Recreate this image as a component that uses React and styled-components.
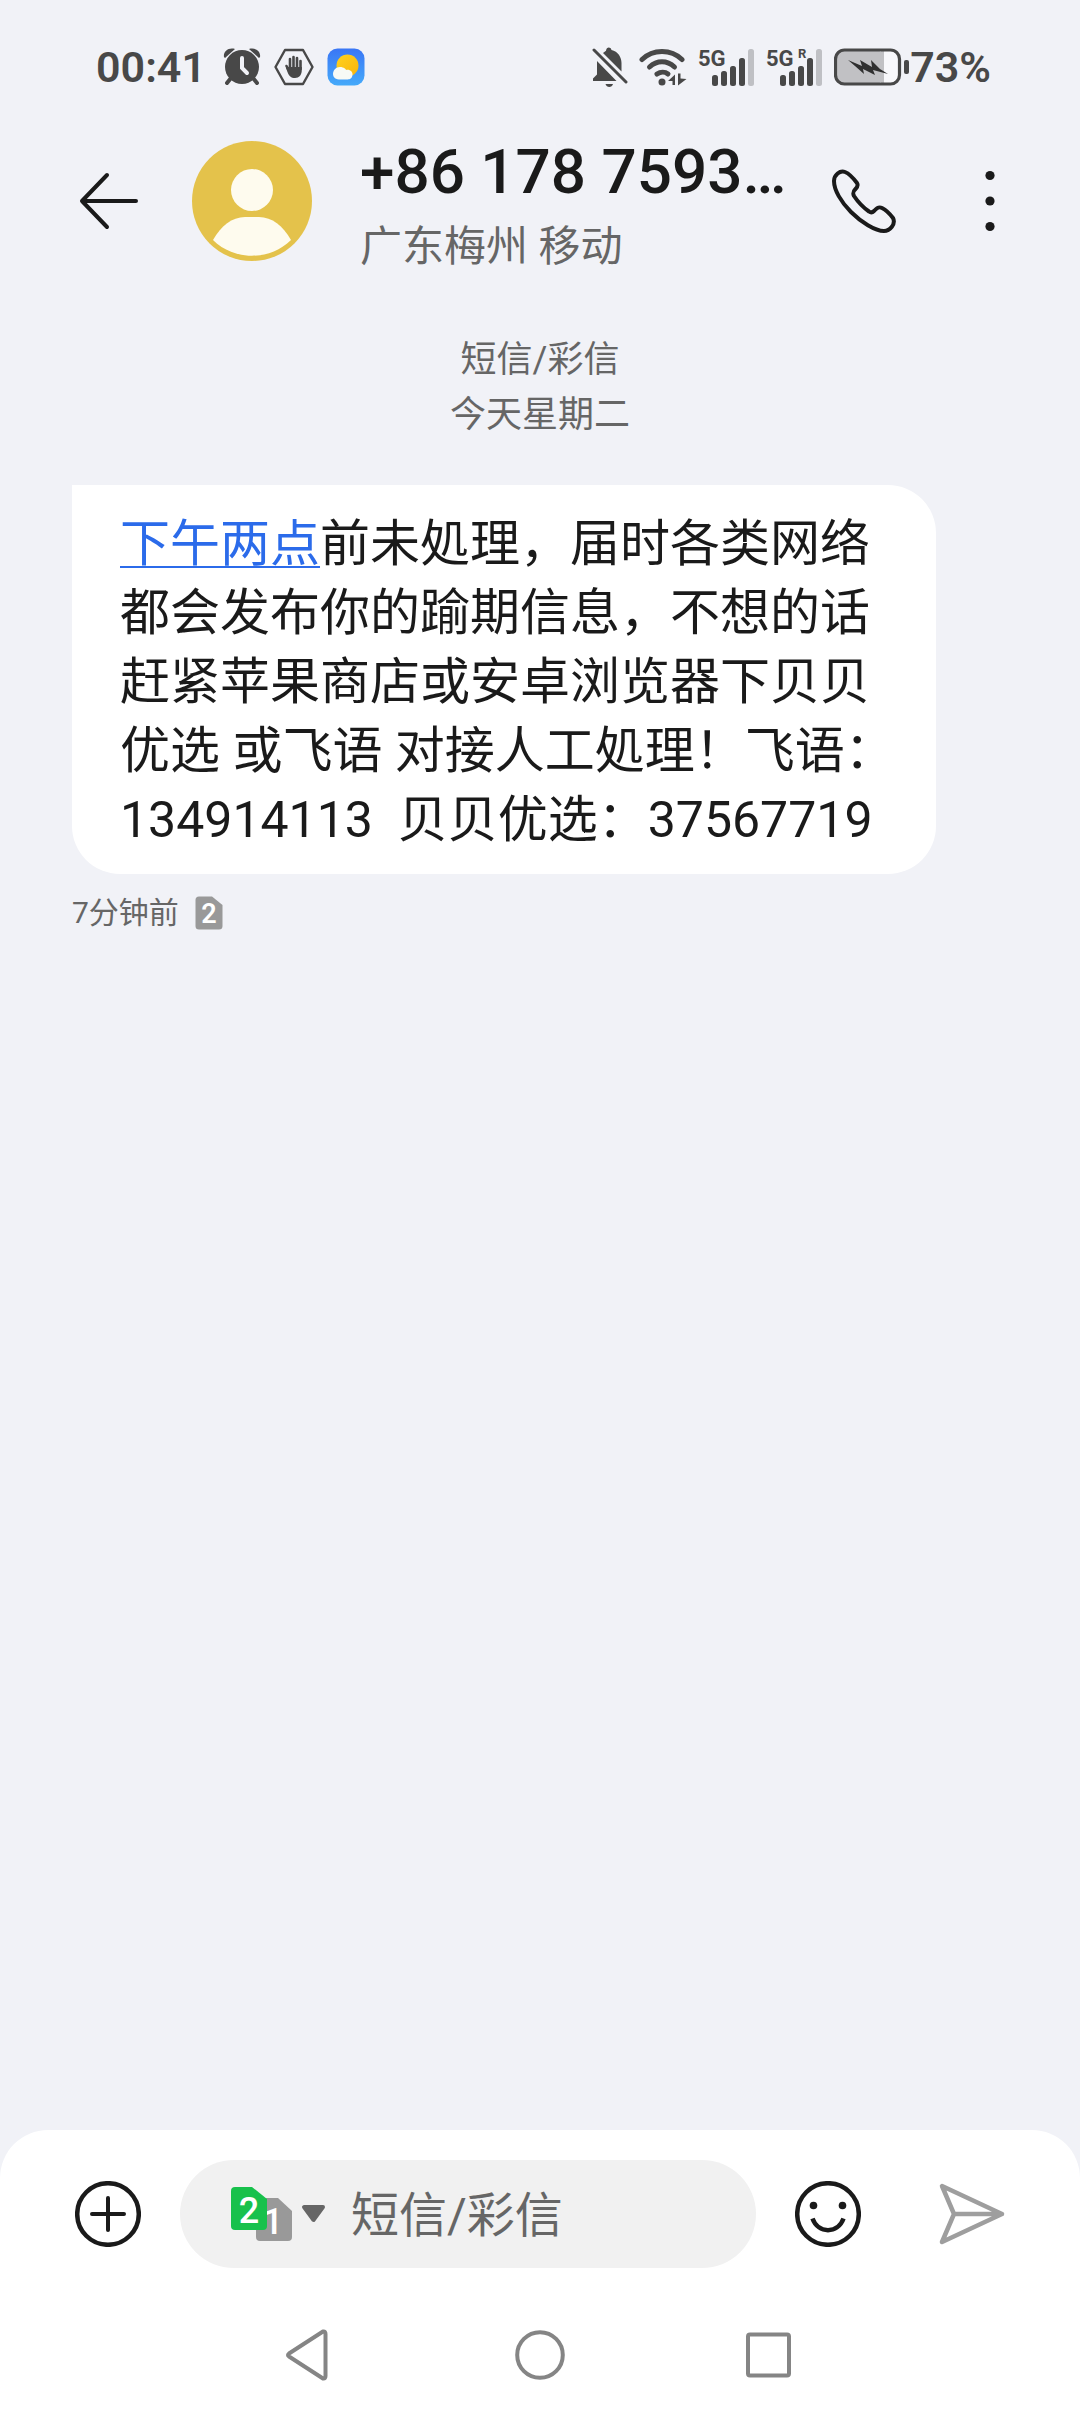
import React, { useState } from 'react';
import styled, { createGlobalStyle } from 'styled-components';

const GlobalStyle = createGlobalStyle`
  * {
    box-sizing: border-box;
  }
  body {
    margin: 0;
    background-color: #f1f2f7;
    color: #1a1a1a;
    font-family: Roboto, 'Noto Sans CJK SC', sans-serif;
  }
  button {
    display: block;
    padding: 0;
    border: 0;
    background: none;
    color: inherit;
    font: inherit;
    cursor: pointer;
  }
  svg {
    display: block;
    flex: none;
  }
  h1,
  p {
    margin: 0;
  }
`;

const Page = styled.div`
  min-height: 100vh;
  display: flex;
  flex-direction: column;
`;

const StatusBar = styled.div`
  display: flex;
  align-items: center;
  justify-content: space-between;
  height: 134px;
  padding: 0 89px 0 96px;
  color: #484848;
`;

const StatusGroup = styled.div`
  display: flex;
  align-items: center;
  gap: ${(props) => props.$gap}px;
`;

const StatusText = styled.span`
  font-size: 43px;
  font-weight: 600;
  line-height: 48px;
`;

const BatteryLevel = styled.div`
  display: flex;
  align-items: center;
`;

const ChatHeader = styled.header`
  display: flex;
  align-items: center;
  height: 134px;
  padding: 0 75px 0 78px;
`;

const Avatar = styled.div`
  flex: none;
  margin: 0 48px 0 52px;
`;

const Contact = styled.div`
  flex: 1;
  min-width: 0;
  display: flex;
  flex-direction: column;
  gap: 15px;
  padding-top: 5px;
`;

const ContactNumber = styled.h1`
  font-size: 62px;
  font-weight: 500;
  line-height: 72px;
  white-space: nowrap;
  overflow: hidden;
`;

const ContactPlace = styled.p`
  color: #666;
  font-size: 42px;
  line-height: 48px;
`;

const HeaderActions = styled.div`
  display: flex;
  align-items: center;
  gap: 78px;
`;

const Thread = styled.main`
  flex: 1;
  padding: 65px 72px;
`;

const ThreadInfo = styled.div`
  margin-bottom: 42px;
  color: #666;
  font-size: 36px;
  line-height: 55px;
  text-align: center;
`;

const Bubble = styled.div`
  max-width: 864px;
  padding: 25px 36px 19px 48px;
  border-radius: 0 48px 48px 48px;
  background-color: #fff;
  font-size: 50px;
  line-height: 69px;
  white-space: pre-wrap;
  a {
    color: #2b6bea;
    text-decoration-thickness: 2px;
    text-underline-offset: 5px;
    text-decoration-skip-ink: none;
  }
`;

const BubbleMeta = styled.div`
  display: flex;
  align-items: center;
  gap: 16px;
  margin-top: 15px;
  color: #666;
  font-size: 30px;
  line-height: 48px;
`;

const BottomPanel = styled.footer`
  border-radius: 48px 48px 0 0;
  background-color: #fff;
`;

const Composer = styled.form`
  display: flex;
  align-items: center;
  padding: 30px 75px;
`;

const InputPill = styled.div`
  flex: 1;
  min-width: 0;
  display: flex;
  align-items: center;
  gap: 26px;
  height: 108px;
  margin: 0 39px;
  padding: 0 51px;
  border-radius: 54px;
  background-color: #f1f1f1;
`;

const MessageInput = styled.input`
  flex: 1;
  min-width: 0;
  padding: 3px 0 0;
  border: 0;
  outline: 0;
  background: none;
  color: #1a1a1a;
  font: inherit;
  font-size: 48px;
  line-height: 72px;
  &::placeholder {
    color: #666;
    opacity: 1;
  }
`;

const SendButton = styled.button`
  margin-left: 75px;
`;

const NavBar = styled.nav`
  display: flex;
  align-items: center;
  justify-content: space-around;
  height: 114px;
  padding: 0 192px;
`;

const AlarmIcon = () => (
  <svg width="38" height="38" viewBox="0 0 38 38" fill="#484848">
    <path d="M1 9C0 4 5-1 12 1L2 10zM37 9C38 4 33-1 26 1L36 10z" />
    <path d="M8 30L4 35M30 30L34 35" stroke="#484848" strokeWidth="4" strokeLinecap="round" />
    <circle cx="19" cy="19" r="17" />
    <path d="M19 10V20L24 25" fill="none" stroke="#f1f2f7" strokeWidth="4" strokeLinecap="round" />
  </svg>
);

const HandIcon = () => (
  <svg width="40" height="38" viewBox="0 0 40 38" fill="none" stroke="#484848" strokeLinecap="round" strokeLinejoin="round">
    <path d="M11 2H29L38.5 19L29 36H11L1.5 19Z" strokeWidth="2.4" />
    <path d="M16 20V11M19.5 20V9M23 20V10M26.5 21V13M12.5 18L15.5 24" strokeWidth="2.6" />
    <path d="M14.7 19H27.8V22C27.8 27 25 30 21 30C17 30 15 28 13.5 24L12 20Z" fill="#484848" stroke="none" />
  </svg>
);

const WeatherIcon = () => (
  <svg width="38" height="38" viewBox="0 0 38 38">
    <defs>
      <linearGradient id="sky" x1="0" y1="0" x2="0" y2="1">
        <stop offset="0" stopColor="#3a76f5" />
        <stop offset="1" stopColor="#45aafa" />
      </linearGradient>
      <linearGradient id="sun" x1="0" y1="0" x2="1" y2="1">
        <stop offset="0" stopColor="#ffd21f" />
        <stop offset="1" stopColor="#f9b40b" />
      </linearGradient>
    </defs>
    <rect x="0.5" y="0.5" width="37" height="37" rx="10" fill="url(#sky)" />
    <circle cx="20.5" cy="17.5" r="11" fill="url(#sun)" />
    <path d="M12 31.5C3 31 5 19 13 19C17 19 19 21.5 19 22C23 21 26 24 25.5 27C25 31 22 31.5 20 31.5Z" fill="#f7faf5" />
  </svg>
);

const MutedBellIcon = () => (
  <svg width="36" height="40" viewBox="0 0 36 40" fill="#484848">
    <path d="M5 14L24.5 34H1V31.5L5 27.5ZM11 6L14 3.8C14.5-0.3 18.5-0.3 19.5 3C26 4.5 29.5 10 29.5 16V24.5Z" />
    <path d="M2 3L34 35" stroke="#484848" strokeWidth="3" strokeLinecap="round" />
    <path d="M13.5 37H21C20 41 14.5 41 13.5 37Z" />
  </svg>
);

const WifiIcon = () => (
  <svg width="48" height="38" viewBox="0 0 48 38" fill="none" stroke="#484848" strokeWidth="5" strokeLinecap="round">
    <path d="M3 11.5C14 0.8 32 0.8 43 11.5" />
    <path d="M10.5 19C18 12 28 12 35.5 19" />
    <path d="M18 26C21.5 23.5 26 23.5 29 26" />
    <circle cx="23" cy="34" r="3.5" fill="#484848" stroke="none" />
    <path d="M29 33L36 26.5V37H33.5V33ZM39 25.5H41.5V30.5L47.5 31L39 37.5Z" fill="#484848" stroke="none" />
  </svg>
);

const SignalIcon = ({ roaming }) => (
  <svg width="57" height="46" viewBox="0 -4 57 46" fill="#484848" fontWeight="700">
    <text x="0" y="18" fontSize="22">5G</text>
    {roaming && <text x="32" y="10" fontSize="13">R</text>}
    <rect x="14" y="27" width="6" height="11" rx="2.5" />
    <rect x="23" y="23" width="6" height="15" rx="2.5" />
    <rect x="32" y="18" width="6" height="20" rx="2.5" />
    <rect x="41" y="10" width="6" height="28" rx="2.5" />
    <rect x="50" y="1" width="6" height="37" rx="2.5" fill="#bfc0c4" />
  </svg>
);

const BatteryIcon = () => (
  <svg width="76" height="38" viewBox="0 0 76 38">
    <rect x="3" y="2" width="46" height="34" rx="7" fill="#c1c1c4" />
    <rect x="49" y="2" width="16" height="34" rx="5" fill="#f8f8fb" />
    <rect x="47" y="2" width="3" height="34" fill="#c1c1c4" />
    <rect x="1.5" y="2" width="64" height="34" rx="9" fill="none" stroke="#484848" strokeWidth="3.2" />
    <path d="M14 12L28 18L26 12L38 19L37 12L46 21L54 26L39 22L41 27L29 21L30 26L21 18Z" fill="#303030" />
    <rect x="70" y="12" width="5" height="14" rx="2" fill="#484848" />
  </svg>
);

const BackIcon = () => (
  <svg width="62" height="62" viewBox="0 0 62 62" fill="none" stroke="#1a1a1a" strokeWidth="4" strokeLinecap="round" strokeLinejoin="round">
    <path d="M58 31H4M29 5L4 31L29 57" />
  </svg>
);

const AvatarIcon = () => (
  <svg width="120" height="120" viewBox="0 0 120 120">
    <circle cx="60" cy="60" r="60" fill="#e4c24b" />
    <circle cx="60" cy="49" r="21" fill="#fefbee" />
    <path d="M21 99C29 85 40 76 53 76H67C80 76 91 85 99 99C78 120 42 120 21 99Z" fill="#fefbee" />
  </svg>
);

const PhoneIcon = () => (
  <svg width="66" height="66" viewBox="0 0 66 66" fill="none" stroke="#1a1a1a" strokeWidth="4" strokeLinejoin="round">
    <path d="M3 13C3 7 9 2 14 4C19 6 23 11 26 15C27.5 17.5 26.5 19 24.5 21C22 23.5 21.5 25 23 28C27 34 33 40 38 43.5C40 45 41.5 44.5 43 43C46 39.5 48 38.5 51 40C55 42 59 46 62 50C65 56 59 63 53 63C44 63 30 54 20 44C10 34 3 22 3 13Z" />
  </svg>
);

const MoreIcon = () => (
  <svg width="30" height="66" viewBox="0 0 30 66" fill="#1a1a1a">
    <circle cx="15" cy="7.5" r="4.6" />
    <circle cx="15" cy="33" r="4.6" />
    <circle cx="15" cy="58.5" r="4.6" />
  </svg>
);

const SimIcon = () => (
  <svg width="28" height="34" viewBox="0 0 28 34">
    <path d="M4 0.5H17L27.5 9V30Q27.5 33.5 24 33.5H4Q0.5 33.5 0.5 30V4Q0.5 0.5 4 0.5Z" fill="#999" />
    <text x="14" y="27" textAnchor="middle" fontSize="27" fontWeight="600" fill="#fff">2</text>
  </svg>
);

const SimSwitchIcon = () => (
  <svg width="94" height="56" viewBox="0 0 94 56" fontSize="36" fontWeight="500" textAnchor="middle">
    <path d="M30 12H47L61 25V51Q61 55 57 55H29Q25 55 25 51V16Z" fill="#999" />
    <text x="42" y="48" fill="#fff">1</text>
    <path d="M4 1H21L36 13V40Q36 44 32 44H4Q0 44 0 40V5Q0 1 4 1Z" fill="#18c14c" />
    <text x="18" y="37" fill="#fff">2</text>
    <path d="M73 21H92L82.5 34Z" fill="#666" stroke="#666" strokeWidth="4" strokeLinejoin="round" />
  </svg>
);

const AddIcon = () => (
  <svg width="66" height="66" viewBox="0 0 66 66" fill="none" stroke="#1a1a1a" strokeWidth="4" strokeLinecap="round">
    <circle cx="33" cy="33" r="30.8" strokeWidth="4.5" />
    <path d="M33 17V49M17 33H49" />
  </svg>
);

const SmileIcon = () => (
  <svg width="66" height="66" viewBox="0 0 66 66" fill="none" stroke="#1a1a1a" strokeWidth="4.5">
    <circle cx="33" cy="33" r="30.8" />
    <circle cx="18.5" cy="24.5" r="3.8" fill="#1a1a1a" stroke="none" />
    <circle cx="47.5" cy="24.5" r="3.8" fill="#1a1a1a" stroke="none" />
    <path d="M17.5 37.5C23 53 43 53 48.5 37.5" />
  </svg>
);

const SendIcon = () => (
  <svg width="69" height="66" viewBox="0 0 69 66" fill="none" stroke="#9e9e9e" strokeWidth="4.5" strokeLinejoin="round" strokeLinecap="round">
    <path d="M6 5L66 33L6 61L18 33ZM18 33H66" />
  </svg>
);

const navItems = [
  { label: '返回', shape: <path d="M8 25.5Q6 27 8 28.5L42 50.5Q44.500 51 44.500 48V6Q44.500 3 42 3.500Z" /> },
  { label: '主屏幕', shape: <circle cx="27" cy="27" r="22.8" /> },
  { label: '最近任务', shape: <rect x="3" y="6.5" width="41" height="41" rx="2" /> },
];

const smsText =
  '前未処理，届时各类网络都会发布你的踰期信息，不想的话赶紧苹果商店或安卓浏览器下贝贝优选 或飞语 对接人工処理！飞语：134914113  贝贝优选：37567719';

const App = () => {
  const [message, setMessage] = useState('');

  return (
    <>
      <GlobalStyle />
      <Page>
        <StatusBar>
          <StatusGroup $gap={17}>
            <StatusText>00:41</StatusText>
            <StatusGroup $gap={13}>
              <AlarmIcon />
              <HandIcon />
              <WeatherIcon />
            </StatusGroup>
          </StatusGroup>
          <StatusGroup $gap={11}>
            <MutedBellIcon />
            <WifiIcon />
            <SignalIcon />
            <SignalIcon roaming />
            <BatteryLevel>
              <BatteryIcon />
              <StatusText>73%</StatusText>
            </BatteryLevel>
          </StatusGroup>
        </StatusBar>
        <ChatHeader>
          <button type="button" aria-label="返回">
            <BackIcon />
          </button>
          <Avatar>
            <AvatarIcon />
          </Avatar>
          <Contact>
            <ContactNumber>+86 178 7593…</ContactNumber>
            <ContactPlace>广东梅州 移动</ContactPlace>
          </Contact>
          <HeaderActions>
            <button type="button" aria-label="拨打电话">
              <PhoneIcon />
            </button>
            <button type="button" aria-label="更多">
              <MoreIcon />
            </button>
          </HeaderActions>
        </ChatHeader>
        <Thread>
          <ThreadInfo>
            <p>短信/彩信</p>
            <p>今天星期二</p>
          </ThreadInfo>
          <Bubble>
            <a href="#time">下午两点</a>
            {smsText}
          </Bubble>
          <BubbleMeta>
            <span>7分钟前</span>
            <SimIcon />
          </BubbleMeta>
        </Thread>
        <BottomPanel>
          <Composer onSubmit={(e) => e.preventDefault()}>
            <button type="button" aria-label="添加">
              <AddIcon />
            </button>
            <InputPill>
              <button type="button" aria-label="切换 SIM 卡">
                <SimSwitchIcon />
              </button>
              <MessageInput
                aria-label="短信/彩信"
                placeholder="短信/彩信"
                value={message}
                onChange={(e) => setMessage(e.target.value)}
              />
            </InputPill>
            <button type="button" aria-label="表情">
              <SmileIcon />
            </button>
            <SendButton type="submit" aria-label="发送">
              <SendIcon />
            </SendButton>
          </Composer>
          <NavBar>
            {navItems.map((item) => (
              <button type="button" key={item.label} aria-label={item.label}>
                <svg width="54" height="54" viewBox="0 0 54 54" fill="none" stroke="#858585" strokeWidth="4" strokeLinejoin="round">
                  {item.shape}
                </svg>
              </button>
            ))}
          </NavBar>
        </BottomPanel>
      </Page>
    </>
  );
};

export default App;
